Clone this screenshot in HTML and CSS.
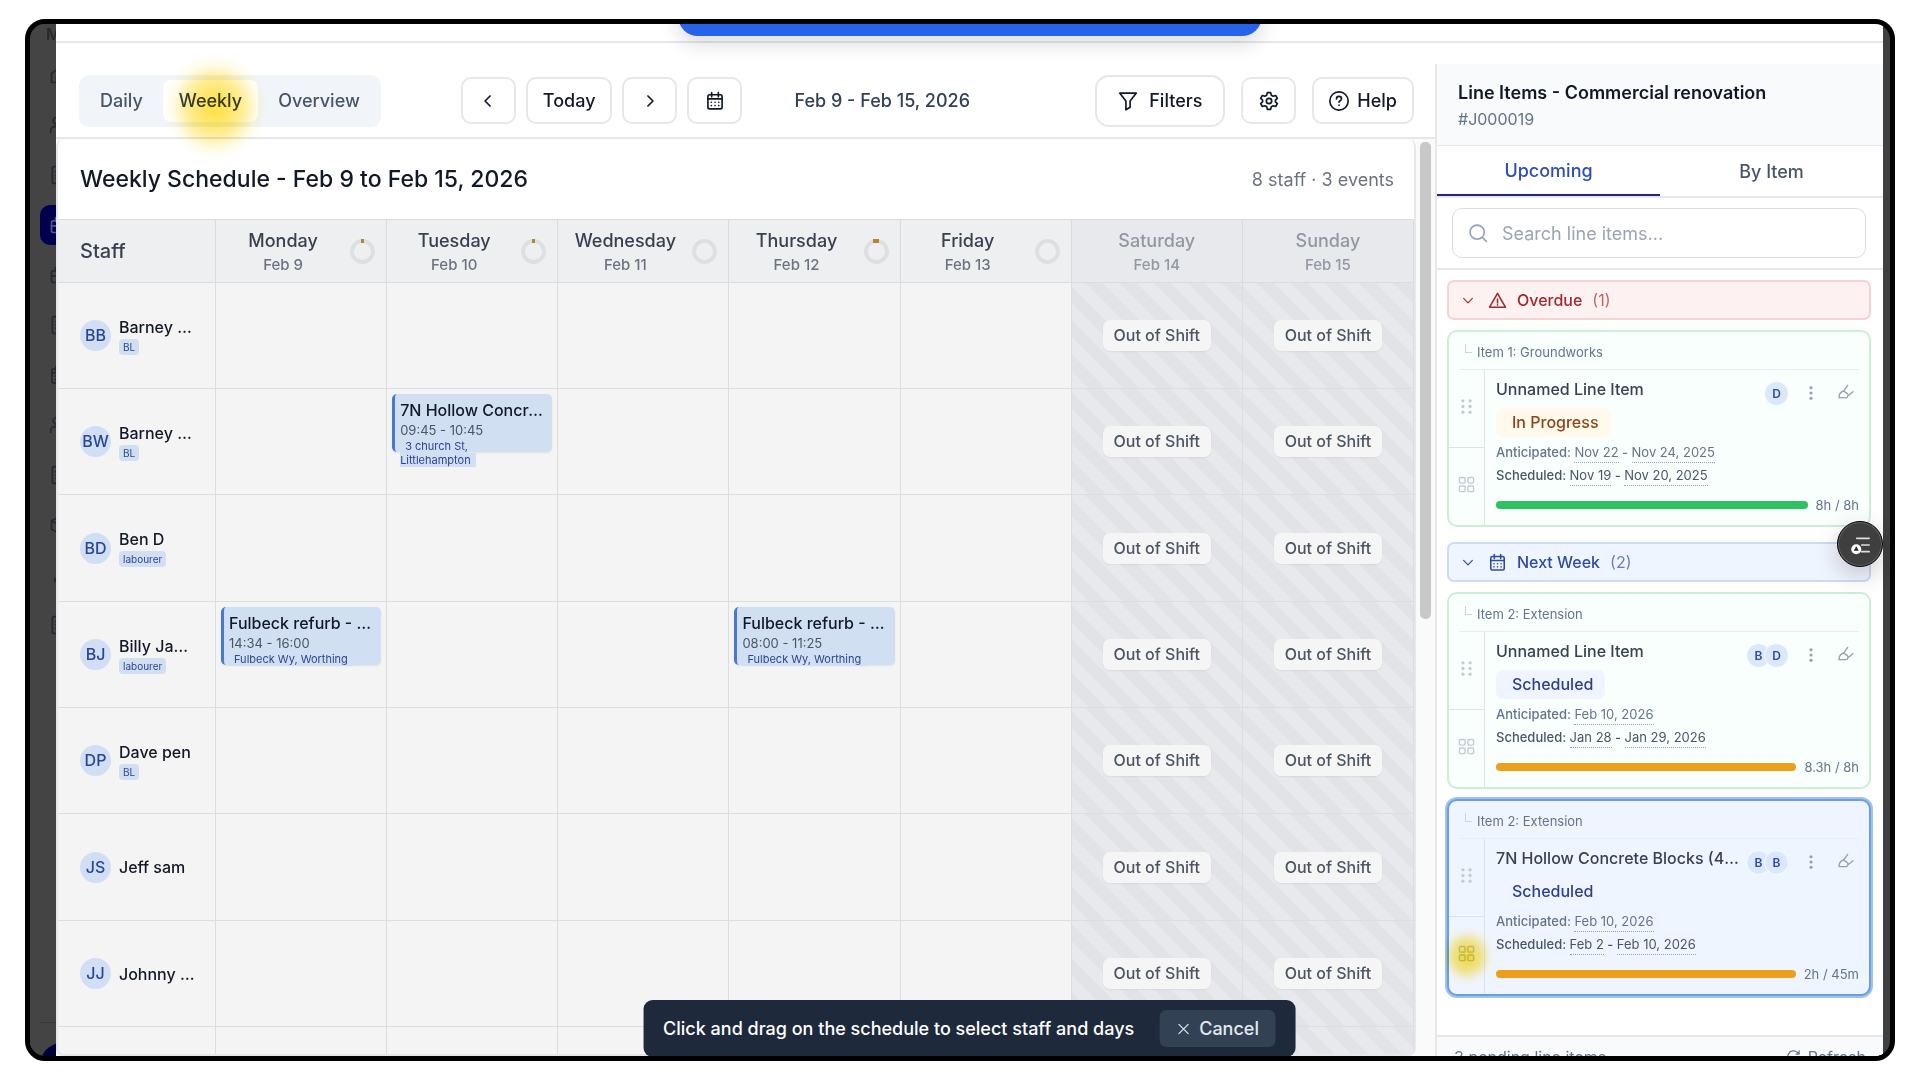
FILE: index.html
```html
<!DOCTYPE html>
<html lang="en">
  <head>
    <meta charset="utf-8">
    <title>Weekly Schedule</title>
    <link rel="stylesheet" href="styles.css">
  </head>
  <body>
    <!-- Shared icons -->
    <svg class="icon-defs" aria-hidden="true">
      <symbol id="calendar" viewBox="0 0 24 24"><rect x="3.5" y="4.5" width="17" height="17" rx="2"/><path d="M3.5 9.5h17M8 2v5M16 2v5"/><path d="M7.5 13.5h.1M12 13.5h.1M16.5 13.5h.1M7.5 17.5h.1M12 17.5h.1M16.5 17.5h.1" stroke-width="2"/></symbol>
      <symbol id="left" viewBox="0 0 24 24"><path d="M14.5 6l-6 6 6 6"/></symbol>
      <symbol id="right" viewBox="0 0 24 24"><path d="M9.5 6l6 6-6 6"/></symbol>
      <symbol id="down" viewBox="0 0 24 24"><path d="M4.5 8.500l7.500 7.500 7.500-7.500"/></symbol>
      <symbol id="more" viewBox="0 0 24 24"><g fill="currentColor" stroke="none"><circle cx="12" cy="3" r="2.700"/><circle cx="12" cy="12" r="2.700"/><circle cx="12" cy="21" r="2.700"/></g></symbol>
      <symbol id="brush" viewBox="0 0 24 24"><path d="M14.500 2L8.500 10.500C5 11.500 1.500 15 1.500 20.500h11c3-1 3.500-4.500 1-6.500l-5-3.500M14.500 18l8-6.500"/></symbol>
      <symbol id="drag" viewBox="0 0 24 24"><g fill="currentColor" stroke="none"><circle cx="7" cy="4" r="2.300"/><circle cx="17" cy="4" r="2.300"/><circle cx="7" cy="12" r="2.300"/><circle cx="17" cy="12" r="2.300"/><circle cx="7" cy="20" r="2.300"/><circle cx="17" cy="20" r="2.300"/></g></symbol>
      <symbol id="tiles" viewBox="0 0 24 24"><rect x="2" y="2" width="8" height="8" rx="1.500"/><rect x="14" y="2" width="8" height="8" rx="1.500"/><rect x="2" y="14" width="8" height="8" rx="1.500"/><rect x="14" y="14" width="8" height="8" rx="1.500"/></symbol>
      <symbol id="home" viewBox="0 0 24 24"><path d="M3 10.500L12 3l9 7.500V21H3zM9 21v-7h6v7"/></symbol>
      <symbol id="users" viewBox="0 0 24 24"><circle cx="9" cy="7" r="4"/><path d="M2 21v-2a5 5 0 015-5h4a5 5 0 015 5v2M16 3a4 4 0 010 8M22 21v-2a5 5 0 00-4-5"/></symbol>
      <symbol id="doc" viewBox="0 0 24 24"><rect x="4" y="2" width="16" height="20" rx="2"/><path d="M8 8h8M8 12h8M8 16h5"/></symbol>
      <symbol id="case" viewBox="0 0 24 24"><rect x="3" y="7" width="18" height="14" rx="2"/><path d="M8 7V3h8v4M3 13h18"/></symbol>
      <symbol id="box" viewBox="0 0 24 24"><path d="M12 2l9 5v10l-9 5-9-5V7zM3 7l9 5 9-5M12 12v10"/></symbol>
      <symbol id="chart" viewBox="0 0 24 24"><path d="M7 16v4M12 10v10M17 5v15"/></symbol>
    </svg>

    <div class="frame">
      <nav class="sidebar" aria-label="Main">
        <span class="brand">M</span>
        <a class="nav-item" href="#" aria-label="Home"><svg><use href="#home"/></svg></a>
        <a class="nav-item" href="#" aria-label="Staff"><svg><use href="#users"/></svg></a>
        <a class="nav-item" href="#" aria-label="Quotes"><svg><use href="#doc"/></svg></a>
        <a class="nav-item active" href="#" aria-label="Jobs"><svg><use href="#case"/></svg></a>
        <a class="nav-item" href="#" aria-label="Work"><svg><use href="#case"/></svg></a>
        <a class="nav-item" href="#" aria-label="Files"><svg><use href="#doc"/></svg></a>
        <a class="nav-item" href="#" aria-label="Calendar"><svg><use href="#calendar"/></svg></a>
        <a class="nav-item" href="#" aria-label="Clients"><svg><use href="#users"/></svg></a>
        <a class="nav-item" href="#" aria-label="Invoices"><svg><use href="#doc"/></svg></a>
        <a class="nav-item" href="#" aria-label="Stock"><svg><use href="#box"/></svg></a>
        <a class="nav-item" href="#" aria-label="Reports"><svg><use href="#chart"/></svg></a>
        <a class="nav-item" href="#" aria-label="Notes"><svg><use href="#doc"/></svg></a>
        <div class="profile"><span class="profile-dot"></span></div>
      </nav>

      <main class="modal">
        <div class="modal-top"></div>
        <div class="columns">
          <section class="schedule">
            <div class="toolbar">
              <div class="view-tabs">
                <button class="view-tab">Daily</button>
                <button class="view-tab selected">Weekly<span class="glow glow-tab"></span></button>
                <button class="view-tab">Overview</button>
              </div>
              <div class="date-nav">
                <button class="tool-button square" aria-label="Previous week"><svg><use href="#left"/></svg></button>
                <button class="tool-button">Today</button>
                <button class="tool-button square" aria-label="Next week"><svg><use href="#right"/></svg></button>
                <button class="tool-button square" aria-label="Pick a date"><svg><use href="#calendar"/></svg></button>
              </div>
              <span class="range">Feb 9 - Feb 15, 2026</span>
              <div class="actions">
                <button class="tool-button filters"><svg viewBox="0 0 24 24"><path d="M2 2.500h20L14.500 12v7.500l-5 3V12z"/></svg>Filters</button>
                <button class="tool-button square" aria-label="Settings"><svg viewBox="0 0 24 24"><path d="M10 2h4l.7 3 2.300 1.300 3-.9 2 3.500-2.300 2.100v2l2.300 2.100-2 3.500-3-.9-2.300 1.300-.7 3h-4l-.7-3L7 17.700l-3 .9-2-3.500L4.300 13v-2L2 8.900l2-3.500 3 .9L9.300 5z"/><circle cx="12" cy="12" r="3.200"/></svg></button>
                <button class="tool-button help"><svg viewBox="0 0 24 24"><circle cx="12" cy="12" r="11"/><path d="M9 9.500a3 3 0 116 0c0 2-3 2.300-3 4M12 17h.1"/></svg>Help</button>
              </div>
            </div>

            <div class="scroll-area">
              <div class="week">
                <header class="week-head">
                  <h1>Weekly Schedule - Feb 9 to Feb 15, 2026</h1>
                  <span>8 staff · 3 events</span>
                </header>
                <table class="week-table">
                  <thead>
                    <tr>
                      <th class="staff-col">Staff</th>
                      <th><div class="day"><span>Monday<small>Feb 9</small></span><i class="ring used"></i></div></th>
                      <th><div class="day"><span>Tuesday<small>Feb 10</small></span><i class="ring used"></i></div></th>
                      <th><div class="day"><span>Wednesday<small>Feb 11</small></span><i class="ring"></i></div></th>
                      <th><div class="day"><span>Thursday<small>Feb 12</small></span><i class="ring used half"></i></div></th>
                      <th><div class="day"><span>Friday<small>Feb 13</small></span><i class="ring"></i></div></th>
                      <th class="weekend"><div class="day"><span>Saturday<small>Feb 14</small></span></div></th>
                      <th class="weekend"><div class="day"><span>Sunday<small>Feb 15</small></span></div></th>
                    </tr>
                  </thead>
                  <tbody>
                    <tr>
                      <td><div class="person"><span class="avatar">BB</span><div class="who"><p>Barney Brown</p><span class="tag">BL</span></div></div></td>
                      <td></td><td></td><td></td><td></td><td></td>
                      <td class="off"><span>Out of Shift</span></td><td class="off"><span>Out of Shift</span></td>
                    </tr>
                    <tr>
                      <td><div class="person"><span class="avatar">BW</span><div class="who"><p>Barney White</p><span class="tag">BL</span></div></div></td>
                      <td></td>
                      <td><div class="event"><p>7N Hollow Concrete Blocks</p><time>09:45 - 10:45</time><span class="place">3 church St, <br>Littlehampton</span></div></td>
                      <td></td><td></td><td></td>
                      <td class="off"><span>Out of Shift</span></td><td class="off"><span>Out of Shift</span></td>
                    </tr>
                    <tr>
                      <td><div class="person"><span class="avatar">BD</span><div class="who"><p>Ben D</p><span class="tag">labourer</span></div></div></td>
                      <td></td><td></td><td></td><td></td><td></td>
                      <td class="off"><span>Out of Shift</span></td><td class="off"><span>Out of Shift</span></td>
                    </tr>
                    <tr>
                      <td><div class="person"><span class="avatar">BJ</span><div class="who"><p>Billy James</p><span class="tag">labourer</span></div></div></td>
                      <td><div class="event"><p>Fulbeck refurb - Extension</p><time>14:34 - 16:00</time><span class="place">Fulbeck Wy, Worthing</span></div></td>
                      <td></td><td></td>
                      <td><div class="event"><p>Fulbeck refurb - Extension</p><time>08:00 - 11:25</time><span class="place">Fulbeck Wy, Worthing</span></div></td>
                      <td></td>
                      <td class="off"><span>Out of Shift</span></td><td class="off"><span>Out of Shift</span></td>
                    </tr>
                    <tr>
                      <td><div class="person"><span class="avatar">DP</span><div class="who"><p>Dave pen</p><span class="tag">BL</span></div></div></td>
                      <td></td><td></td><td></td><td></td><td></td>
                      <td class="off"><span>Out of Shift</span></td><td class="off"><span>Out of Shift</span></td>
                    </tr>
                    <tr>
                      <td><div class="person"><span class="avatar">JS</span><div class="who"><p>Jeff sam</p></div></div></td>
                      <td></td><td></td><td></td><td></td><td></td>
                      <td class="off"><span>Out of Shift</span></td><td class="off"><span>Out of Shift</span></td>
                    </tr>
                    <tr>
                      <td><div class="person"><span class="avatar">JJ</span><div class="who"><p>Johnny Jones</p></div></div></td>
                      <td></td><td></td><td></td><td></td><td></td>
                      <td class="off"><span>Out of Shift</span></td><td class="off"><span>Out of Shift</span></td>
                    </tr>
                    <tr>
                      <td></td><td></td><td></td><td></td><td></td><td></td>
                      <td class="off"></td><td class="off"></td>
                    </tr>
                  </tbody>
                </table>
              </div>
              <div class="scroll-track"><div class="scroll-thumb"></div></div>
            </div>
          </section>

          <aside class="panel">
            <header class="panel-head">
              <h2>Line Items - Commercial renovation</h2>
              <p>#J000019</p>
            </header>
            <div class="panel-tabs">
              <button class="panel-tab selected">Upcoming</button>
              <button class="panel-tab">By Item</button>
            </div>
            <div class="search">
              <label class="search-box">
                <svg viewBox="0 0 24 24"><circle cx="11" cy="11" r="8.500"/><path d="M17.500 17.500L22 22"/></svg>
                <input type="search" placeholder="Search line items..." aria-label="Search line items">
              </label>
            </div>

            <div class="panel-list">
              <button class="group overdue">
                <svg class="caret"><use href="#down"/></svg>
                <svg viewBox="0 0 24 24"><path d="M12 3L22 20.500H2zM12 10v5M12 17.500v.3"/></svg>
                Overdue <span>(1)</span>
              </button>

              <article class="card">
                <p class="crumb"><i></i>Item 1: Groundworks</p>
                <div class="card-body">
                  <div class="rail">
                    <button aria-label="Drag"><svg><use href="#drag"/></svg></button>
                    <button aria-label="Select on grid"><svg><use href="#tiles"/></svg></button>
                  </div>
                  <div class="details">
                    <div class="card-title">
                      <h3>Unnamed Line Item</h3>
                      <div class="initials"><span>D</span></div>
                      <button aria-label="More"><svg class="dots"><use href="#more"/></svg></button>
                      <button aria-label="Colour"><svg><use href="#brush"/></svg></button>
                    </div>
                    <span class="status progress">In Progress</span>
                    <p class="dates">Anticipated: <u>Nov 22</u> - <u>Nov 24, 2025</u></p>
                    <p class="dates planned">Scheduled: <u>Nov 19</u> - <u>Nov 20, 2025</u></p>
                    <div class="hours"><span class="bar done"></span>8h / 8h</div>
                  </div>
                </div>
              </article>

              <button class="group next">
                <svg class="caret"><use href="#down"/></svg>
                <svg><use href="#calendar"/></svg>
                Next Week <span>(2)</span>
              </button>

              <article class="card">
                <p class="crumb"><i></i>Item 2: Extension</p>
                <div class="card-body">
                  <div class="rail">
                    <button aria-label="Drag"><svg><use href="#drag"/></svg></button>
                    <button aria-label="Select on grid"><svg><use href="#tiles"/></svg></button>
                  </div>
                  <div class="details">
                    <div class="card-title">
                      <h3>Unnamed Line Item</h3>
                      <div class="initials"><span>B</span><span>D</span></div>
                      <button aria-label="More"><svg class="dots"><use href="#more"/></svg></button>
                      <button aria-label="Colour"><svg><use href="#brush"/></svg></button>
                    </div>
                    <span class="status">Scheduled</span>
                    <p class="dates">Anticipated: <u>Feb 10, 2026</u></p>
                    <p class="dates planned">Scheduled: <u>Jan 28</u> - <u>Jan 29, 2026</u></p>
                    <div class="hours"><span class="bar"></span>8.3h / 8h</div>
                  </div>
                </div>
              </article>

              <article class="card picked">
                <p class="crumb"><i></i>Item 2: Extension</p>
                <div class="card-body">
                  <div class="rail">
                    <button aria-label="Drag"><svg><use href="#drag"/></svg></button>
                    <button aria-label="Select on grid"><svg><use href="#tiles"/></svg><span class="glow glow-rail"></span></button>
                  </div>
                  <div class="details">
                    <div class="card-title">
                      <h3>7N Hollow Concrete Blocks (440mm)</h3>
                      <div class="initials"><span>B</span><span>B</span></div>
                      <button aria-label="More"><svg class="dots"><use href="#more"/></svg></button>
                      <button aria-label="Colour"><svg><use href="#brush"/></svg></button>
                    </div>
                    <span class="status">Scheduled</span>
                    <p class="dates">Anticipated: <u>Feb 10, 2026</u></p>
                    <p class="dates planned">Scheduled: <u>Feb 2</u> - <u>Feb 10, 2026</u></p>
                    <div class="hours"><span class="bar"></span>2h / 45m</div>
                  </div>
                </div>
              </article>
            </div>

            <footer class="panel-foot">
              <span>3 pending line items</span>
              <button><svg viewBox="0 0 24 24"><path d="M21 12a9 9 0 11-3-6.700L21 8M21 3v5h-5"/></svg>Refresh</button>
            </footer>
          </aside>
        </div>

        <div class="banner"></div>

        <div class="toast" role="status">
          Click and drag on the schedule to select staff and days
          <button><svg viewBox="0 0 24 24"><path d="M4 4l16 16M20 4L4 20"/></svg>Cancel</button>
        </div>
      </main>

      <button class="fab" aria-label="Open list">
        <svg viewBox="0 0 24 24"><path d="M8 4h15M14 12h9M14 20h9"/><circle cx="7.500" cy="17" r="6" fill="#fff" stroke="none"/><path d="M7.500 13.500l3 5.500h-6z" fill="#222" stroke="none"/></svg>
      </button>
    </div>
  </body>
</html>
```
FILE: styles.css
```css
* {
  box-sizing: border-box;
}

body {
  margin: 0;
  height: 100vh;
  padding: 19px 25px;
  background: white;
  font-family: Inter, "Liberation Sans", sans-serif;
  font-size: 18px;
  color: #111827;
}

h1, h2, h3, p {
  margin: 0;
  font-weight: 500;
}

button {
  font: inherit;
  color: inherit;
  background: none;
  border: none;
  padding: 0;
  cursor: pointer;
}

svg {
  width: 20px;
  height: 20px;
  flex: none;
  fill: none;
  stroke: currentColor;
  stroke-width: 2;
  stroke-linecap: round;
  stroke-linejoin: round;
}

.icon-defs {
  display: none;
}

.frame {
  position: relative;
  display: flex;
  height: 100%;
  padding-right: 7px;
  border: 5px solid black;
  border-radius: 20px;
  background: #3e4041;
  overflow: hidden;
}

/* Sidebar, mostly hidden behind the modal */
.sidebar {
  display: flex;
  flex-direction: column;
  gap: 10px;
  width: 26px;
  padding: 0 0 0 10px;
  background: #444;
  color: #26282e;
  overflow: hidden;
}

.brand {
  height: 21px;
  padding-left: 6px;
  font-size: 16px;
  font-weight: 600;
  line-height: 20px;
}

.nav-item {
  display: flex;
  flex: none;
  align-items: center;
  width: 40px;
  height: 40px;
  padding-left: 9px;
  border-radius: 10px;
  color: inherit;
}

.nav-item.active {
  background: #00004e;
  color: #55577c;
}

.profile {
  flex: none;
  width: 40px;
  margin-top: auto;
  padding-top: 20px;
  height: 34px;
  border-top: 1px solid #38383a;
}

.profile-dot {
  display: block;
  width: 44px;
  height: 44px;
  border-radius: 50%;
  background: #00003c;
}

.modal {
  position: relative;
  display: flex;
  flex: 1;
  flex-direction: column;
  min-width: 0;
  background: white;
  overflow: hidden;
}

.modal-top {
  flex: none;
  height: 19px;
  margin-bottom: 21px;
  border-bottom: 2px solid #e5e7eb;
}

.columns {
  display: flex;
  flex: 1;
  min-height: 0;
}

.schedule {
  display: flex;
  flex: 1;
  flex-direction: column;
  min-width: 0;
}

/* Toolbar */
.toolbar {
  display: flex;
  flex: none;
  align-items: center;
  height: 75px;
  padding: 0 21px 0 23px;
  border-bottom: 2px solid #e5e7e9;
  font-weight: 500;
}

.view-tabs {
  display: flex;
  gap: 4px;
  padding: 5px;
  border-radius: 10px;
  background: #f1f5f9;
  color: #475569;
}

.view-tab {
  position: relative;
  height: 42px;
  padding: 0 16px;
  border-radius: 8px;
}

.view-tab.selected {
  background: white;
  color: #334155;
}

.glow {
  position: absolute;
  top: 50%;
  left: 50%;
  transform: translate(-50%, -50%);
  border-radius: 50%;
  background: radial-gradient(closest-side, rgba(255, 221, 50, 0.85) 15%, rgba(255, 224, 70, 0.6) 50%, rgba(255, 230, 100, 0.15) 80%, rgba(255, 230, 100, 0));
  mix-blend-mode: multiply;
  pointer-events: none;
}

.glow-tab {
  top: 65%;
  left: 55%;
  width: 106px;
  height: 106px;
}

.glow-rail {
  width: 56px;
  height: 60px;
}

.date-nav {
  display: flex;
  gap: 10px;
  margin-left: 80px;
}

.tool-button {
  display: flex;
  align-items: center;
  justify-content: center;
  gap: 11px;
  height: 47px;
  padding: 0 15px;
  border: 2px solid #e5e7eb;
  border-radius: 10px;
  background: white;
}

.tool-button.square {
  width: 55px;
  padding: 0;
}

.tool-button.filters {
  height: 52px;
  padding: 0 21px;
  border-radius: 14px;
}

.tool-button.help {
  gap: 8px;
}

.range {
  margin-left: 52px;
  color: #334155;
}

.actions {
  display: flex;
  align-items: center;
  gap: 16px;
  margin-left: auto;
}

/* Week table */
.scroll-area {
  display: flex;
  flex: 1;
  min-height: 0;
  background: #fafafa;
}

.week {
  flex: 1;
  min-width: 0;
  border: 2px solid #e5e7eb;
  border-top: none;
  border-radius: 8px;
  background: white;
  overflow: hidden;
}

.week-head {
  display: flex;
  align-items: center;
  justify-content: space-between;
  height: 80px;
  padding: 0 20px 0 22px;
}

.week-head h1 {
  font-size: 23px;
}

.week-head span {
  color: #6b7280;
}

.week-table {
  width: 100%;
  table-layout: fixed;
  border-spacing: 0;
}

.week-table th {
  height: 64px;
  padding: 0;
  background: #eeeff1;
  border: solid #d9dbde;
  border-width: 1px 1px 1px 0;
  font-weight: 500;
  color: #374151;
}

.week-table .staff-col {
  width: 158px;
  padding-left: 22px;
  font-size: 20px;
  text-align: left;
}

.week-table .weekend {
  background: #e7e9ed;
  color: #9197a3;
}

.day {
  display: flex;
  align-items: center;
}

.day span {
  flex: 1;
  padding-top: 3px;
  line-height: 24px;
}

.day small {
  display: block;
  font-size: 15px;
  color: #6b7280;
}

.weekend small {
  color: inherit;
}

.ring {
  width: 25px;
  height: 25px;
  margin-right: 11px;
  border: 4px solid #dedfe1;
  border-radius: 50%;
}

.ring.used::before {
  content: "";
  display: block;
  width: 3px;
  height: 4px;
  margin: -4px auto 0;
  background: #b5872b;
}

.ring.half::before {
  width: 6px;
}

.week-table td {
  height: 106px;
  padding: 5px;
  vertical-align: top;
  background: #f4f4f5;
  border: solid #dcdde0;
  border-width: 0 1px 1px 0;
}

.week-table tr:nth-child(3n) td {
  height: 107px;
}

.week-table td:first-child {
  padding: 0 20px 0 22px;
  vertical-align: middle;
}

.week-table td.off {
  vertical-align: middle;
  text-align: center;
  background: repeating-linear-gradient(45deg, #e7e9ed 0 12px, #e1e3e7 12px 24px);
}

.off span {
  display: inline-block;
  padding: 0 11px;
  border-radius: 7px;
  background: #f5f5f6;
  box-shadow: 0 1px 2px rgba(0, 0, 0, 0.06);
  color: #4b5563;
  font-size: 16px;
  font-weight: 500;
  line-height: 31px;
}

.person {
  display: flex;
  align-items: center;
  gap: 8px;
}

.avatar {
  flex: none;
  width: 31px;
  border-radius: 50%;
  background: #d1dff4;
  color: #2b4596;
  font-size: 16px;
  font-weight: 500;
  line-height: 31px;
  text-align: center;
}

.who {
  min-width: 0;
}

.who p,
.event p,
.card-title h3 {
  overflow: hidden;
  white-space: nowrap;
  text-overflow: ellipsis;
}

.who p {
  font-size: 16px;
  line-height: 24px;
}

.tag {
  display: block;
  width: fit-content;
  margin-bottom: 2px;
  padding: 0 4px;
  border-radius: 4px;
  background: #d1dff2;
  color: #2b4596;
  font-size: 10px;
  line-height: 16px;
}

.event {
  height: 58px;
  padding: 5px 7px 0 5px;
  border-left: 3px solid #4a78cc;
  border-radius: 5px;
  background: #d1dff2;
  box-shadow: 0 1px 2px rgba(0, 0, 0, 0.08);
  font-size: 11px;
  line-height: 14px;
}

.event p {
  font-size: 16px;
  line-height: 22px;
}

.event time {
  display: block;
  color: #4b5563;
  font-size: 13px;
  line-height: 18px;
}

.place {
  padding: 0 5px;
  background: #d1dff2;
  color: #2b4596;
}

.scroll-track {
  width: 19px;
  padding: 3px 4px;
}

.scroll-thumb {
  height: 477px;
  border-radius: 5px;
  background: #c8c8c8;
}

/* Line items panel */
.panel {
  display: flex;
  flex: none;
  flex-direction: column;
  width: 448px;
  border-left: 2px solid #e5e7eb;
  background: white;
}

.panel-head {
  flex: none;
  height: 82px;
  padding: 16px 21px;
  border-bottom: 1px solid #e2e5e9;
  background: #f8fafc;
}

.panel-head h2 {
  font-size: 18px;
  font-weight: 600;
  line-height: 26px;
}

.panel-head p {
  color: #64748b;
  font-size: 16px;
  font-weight: 400;
  line-height: 26px;
}

.panel-tabs {
  display: flex;
  flex: none;
  height: 52px;
  border-bottom: 2px solid #e5e7eb;
}

.panel-tab {
  flex: 1;
  color: #475569;
  font-weight: 500;
}

.panel-tab.selected {
  border-bottom: 2px solid #232477;
  color: #2f4eb5;
}

.search {
  flex: none;
  padding: 10px 17px 10px 15px;
  border-bottom: 2px solid #e5e7eb;
}

.search-box {
  display: flex;
  align-items: center;
  gap: 12px;
  height: 50px;
  padding: 0 15px;
  border: 1px solid #d9dde3;
  border-radius: 10px;
  color: #94a3b8;
}

.search-box input {
  flex: 1;
  border: none;
  outline: none;
  font: inherit;
}

.search-box input::placeholder {
  color: #9aa4b2;
}

.panel-list {
  flex: 1;
  min-height: 0;
  padding: 10px 12px 0 10px;
}

.group {
  display: flex;
  align-items: center;
  gap: 10px;
  width: 100%;
  height: 40px;
  padding: 0 12px;
  border: 2px solid;
  border-radius: 7px;
  font-size: 16px;
  font-weight: 500;
}

.group svg {
  width: 19px;
  height: 19px;
}

.group .caret {
  width: 14px;
  margin-right: 3px;
}

.group span {
  opacity: 0.7;
  font-weight: 400;
}

.overdue {
  background: #fef1f1;
  border-color: #f5d2d3;
  color: #9c2b2f;
}

.next {
  margin-top: 15px;
  background: #eff5ff;
  border-color: #ccdcf2;
  color: #2c4aa6;
}

.card {
  margin-top: 10px;
  border: 2px solid #cbeed8;
  border-radius: 10px;
  background: #f9fffc;
}

.card.picked {
  border-color: #6b9de0;
  background: #eff5ff;
  box-shadow: 0 0 0 2px #9cc3f2;
}

.crumb {
  display: flex;
  gap: 5px;
  height: 38px;
  margin: 0 10px;
  padding-left: 6px;
  border-bottom: 1px solid #e9eef1;
  color: #64748b;
  font-size: 13px;
  font-weight: 400;
  line-height: 40px;
}

.crumb i {
  width: 7px;
  height: 9px;
  margin-top: 12px;
  border: solid #cbd5e1;
  border-width: 0 0 1px 1px;
}

.card-body {
  display: flex;
  height: 155px;
}

.rail {
  display: flex;
  flex-direction: column;
  width: 36px;
  border-right: 1px solid #dce4e8;
  color: #c3cad3;
}

.rail button {
  position: relative;
  flex: 1;
}

.rail button:first-child {
  border-bottom: 1px solid #dce4e8;
}

.rail svg {
  width: 17px;
  height: 17px;
}

.details {
  flex: 1;
  min-width: 0;
  padding: 7px 10px 0 11px;
}

.card-title {
  display: flex;
  align-items: center;
  height: 31px;
  margin-right: -4px;
  padding-top: 2px;
  color: #94a0ae;
}

.card-title h3 {
  flex: 1;
  align-self: flex-start;
  color: #374151;
  font-size: 16px;
  line-height: 20px;
}

.card-title button {
  width: 35px;
  height: 24px;
}

.card-title svg {
  width: 16px;
  height: 16px;
}

.card-title .dots {
  width: 14px;
  height: 14px;
}

.initials {
  display: flex;
  margin: 0 4px 0 12px;
}

.initials span {
  width: 25px;
  margin-left: -7px;
  border: 1px solid #f9fffc;
  border-radius: 50%;
  background: #dbe7fd;
  color: #2f4a9c;
  font-size: 12px;
  font-weight: 600;
  line-height: 23px;
  text-align: center;
}

.status {
  display: block;
  width: fit-content;
  padding: 0 12px 0 16px;
  border-radius: 7px;
  background: #eff4ff;
  color: #2c3f8f;
  font-size: 16px;
  font-weight: 500;
  line-height: 29px;
}

.status.progress {
  background: #fffaeb;
  color: #8f4419;
}

.dates {
  color: #64748b;
  font-size: 13px;
  line-height: 23px;
}

.dates u {
  padding-bottom: 2px;
  border-bottom: 1px dotted #94a3b8;
  font-weight: 400;
  text-decoration: none;
}

.planned {
  color: #475569;
}

.status + .dates {
  margin-top: 4px;
}

.hours {
  display: flex;
  align-items: center;
  gap: 8px;
  margin-top: 6px;
  color: #64748b;
  font-size: 13px;
  line-height: 24px;
}

.bar {
  flex: 1;
  height: 8px;
  border-radius: 4px;
  background: #ec9f1c;
}

.bar.done {
  background: #2fc262;
}

.panel-foot {
  display: flex;
  flex: none;
  align-items: center;
  justify-content: space-between;
  height: 41px;
  margin-bottom: -20px;
  padding: 0 17px;
  border-top: 2px solid #e5e7eb;
  background: #f8fafc;
  color: #64748b;
  font-size: 16px;
}

.panel-foot button {
  display: flex;
  align-items: center;
  gap: 7px;
}

.panel-foot svg {
  width: 15px;
  height: 15px;
}

/* Things floating over the page */
.banner {
  position: absolute;
  top: -40px;
  left: 50%;
  width: 584px;
  height: 52px;
  transform: translateX(-50%);
  border-radius: 20px;
  background: #2563eb;
  box-shadow: 0 8px 20px rgba(0, 0, 0, 0.14);
}

.toast {
  position: absolute;
  bottom: -1px;
  left: 50%;
  display: flex;
  align-items: center;
  gap: 25px;
  height: 57px;
  padding: 0 20px;
  transform: translateX(-50%);
  border-radius: 9px;
  background: #1e293b;
  color: white;
  font-weight: 500;
  white-space: nowrap;
}

.toast button {
  display: flex;
  align-items: center;
  gap: 9px;
  height: 37px;
  padding: 0 17px;
  border-radius: 7px;
  background: #334155;
  color: #e2e8f0;
}

.toast svg {
  width: 14px;
  height: 14px;
}

.fab {
  position: absolute;
  top: 497px;
  right: 7px;
  width: 46px;
  height: 46px;
  border: 1px solid black;
  border-radius: 50%;
  background: #3f3f3f;
  box-shadow: inset 0 0 0 1px #666, 0 8px 24px rgba(0, 0, 0, 0.2);
  color: #ddd;
}

.fab svg {
  vertical-align: middle;
}
```
